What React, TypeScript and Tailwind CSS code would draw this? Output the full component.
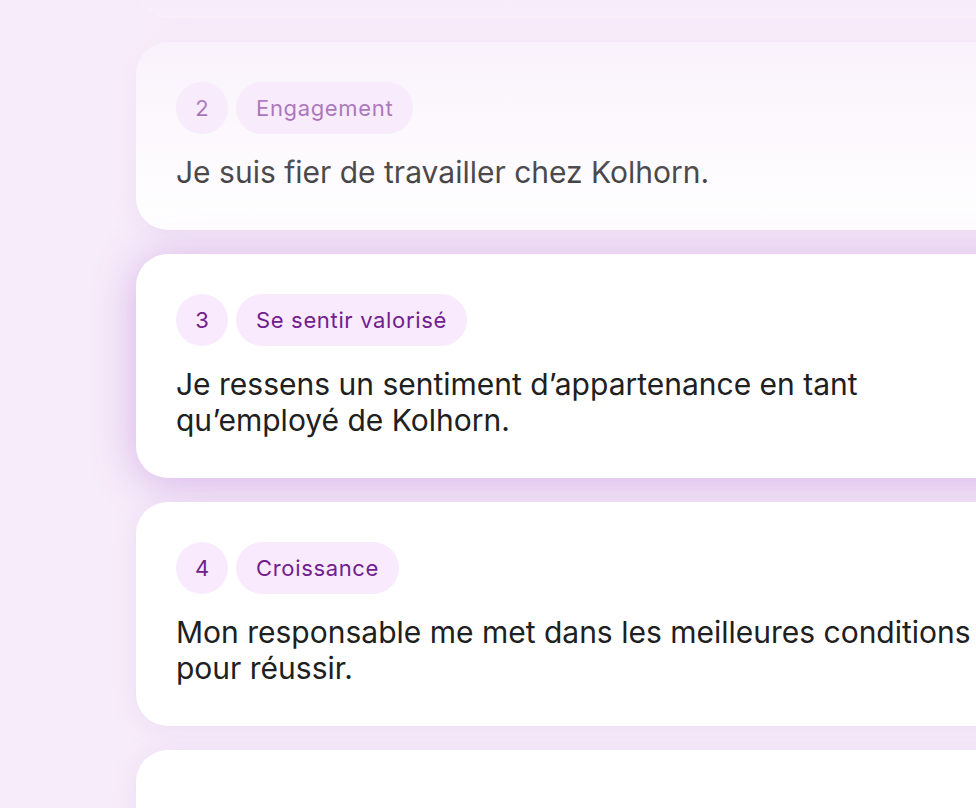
import React from 'react';

type Question = {
  id: number;
  tag: string;
  text: string;
  active?: boolean;
};

const questions: Question[] = [
  { id: 2, tag: 'Engagement', text: 'Je suis fier de travailler chez Kolhorn.' },
  {
    id: 3,
    tag: 'Se sentir valorisé',
    text: 'Je ressens un sentiment d’appartenance en tant qu’employé de Kolhorn.',
    active: true,
  },
  {
    id: 4,
    tag: 'Croissance',
    text: 'Mon responsable me met dans les meilleures conditions pour réussir.',
  },
];

function QuestionCard({ q }: { q: Question }) {
  return (
    <div
      className={
        q.active
          ? 'w-[960px] rounded-[32px] bg-white px-10 py-10 shadow-[0_4px_44px_rgba(168,96,206,0.42)]'
          : 'w-[960px] rounded-[32px] bg-white px-10 py-10 shadow-[0_2px_24px_rgba(190,150,215,0.18)]'
      }
    >
      <div className="flex items-center gap-2">
        <span className="flex h-[52px] w-[52px] items-center justify-center rounded-full bg-[#f9ebfd] text-[22px] text-[#71208e]">
          {q.id}
        </span>
        <span className="flex h-[52px] items-center rounded-full bg-[#f9ebfd] px-5 text-[22px] tracking-[0.03em] text-[#71208e]">
          {q.tag}
        </span>
      </div>
      <p className="mt-5 max-w-[820px] text-[30px] leading-[36px] text-[#202020]">{q.text}</p>
    </div>
  );
}

export default function App() {
  return (
    <div
      className="relative h-[808px] w-[976px] overflow-hidden bg-[#f7ecfa]"
      style={{ fontFamily: 'Inter, "Noto Sans", sans-serif' }}
    >
      {/* Liste des questions */}
      <div className="-mt-[170px] flex flex-col gap-6 pl-[136px]">
        <div className="h-[188px] w-[960px] shrink-0 rounded-[32px] bg-white shadow-[0_2px_24px_rgba(190,150,215,0.18)]" />
        {questions.map((q) => (
          <QuestionCard key={q.id} q={q} />
        ))}
        <div className="h-[200px] w-[960px] shrink-0 rounded-[32px] bg-white shadow-[0_2px_24px_rgba(190,150,215,0.18)]" />
      </div>

      {/* Fondu en haut */}
      <div className="pointer-events-none absolute inset-x-0 top-0 h-[230px] bg-gradient-to-b from-[#f7ecfa]/95 via-[#f7ecfa]/45 via-[45%] to-transparent" />
    </div>
  );
}
